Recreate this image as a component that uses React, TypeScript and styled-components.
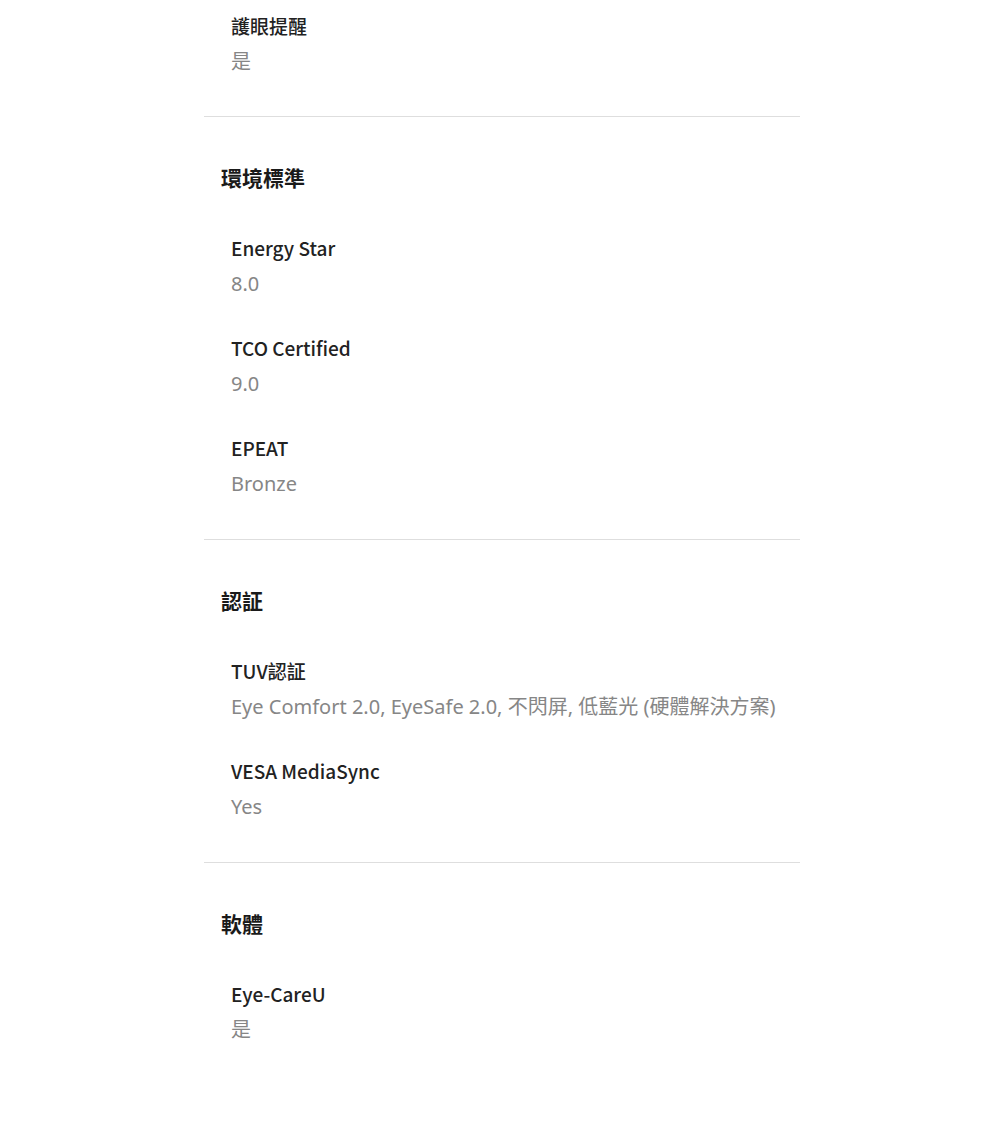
import React from 'react';
import styled, { createGlobalStyle } from 'styled-components';

const GlobalStyle = createGlobalStyle`
  body {
    margin: 0;
    background: #fff;
    font-family: "Noto Sans CJK TC", "Noto Sans", sans-serif;
    color: #222;
  }
`;

interface SpecItem {
  label: string;
  value: string;
}

interface SpecSection {
  title?: string;
  items: SpecItem[];
}

const sections: SpecSection[] = [
  {
    items: [{ label: '護眼提醒', value: '是' }],
  },
  {
    title: '環境標準',
    items: [
      { label: 'Energy Star', value: '8.0' },
      { label: 'TCO Certified', value: '9.0' },
      { label: 'EPEAT', value: 'Bronze' },
    ],
  },
  {
    title: '認証',
    items: [
      { label: 'TUV認証', value: 'Eye Comfort 2.0, EyeSafe 2.0, 不閃屏, 低藍光 (硬體解決方案)' },
      { label: 'VESA MediaSync', value: 'Yes' },
    ],
  },
  {
    title: '軟體',
    items: [{ label: 'Eye-CareU', value: '是' }],
  },
];

const Page = styled.div`
  width: 596px;
  margin-left: 204px;
  padding-bottom: 60px;
`;

const Section = styled.section<{ $last?: boolean; $first?: boolean }>`
  padding-top: ${p => (p.$first ? '8px' : '42px')};
  padding-bottom: ${p => (p.$last ? '0' : p.$first ? '36px' : '37px')};
  border-bottom: ${p => (p.$last ? 'none' : '1px solid #dedede')};
`;

const SectionTitle = styled.h3`
  margin: 0 0 35px;
  padding-left: 17px;
  font-size: 21px;
  line-height: 36px;
  font-weight: 700;
  color: #1a1a1a;
`;

const ItemList = styled.dl`
  margin: 0;
  padding-left: 27px;
  display: flex;
  flex-direction: column;
  gap: 28px;
`;

const Item = styled.div`
  display: flex;
  flex-direction: column;
`;

const Label = styled.dt`
  font-size: 19px;
  line-height: 36px;
  font-weight: 500;
  color: #222;
`;

const Value = styled.dd`
  margin: 0;
  font-family: "Noto Sans", "Noto Sans CJK TC", sans-serif;
  font-size: 20px;
  line-height: 36px;
  font-weight: 400;
  color: #868686;
`;

export default function App() {
  return (
    <>
      <GlobalStyle />
      <Page>
        {sections.map((s, i) => (
          <Section key={i} $first={i === 0} $last={i === sections.length - 1}>
            {s.title && <SectionTitle>{s.title}</SectionTitle>}
            <ItemList>
              {s.items.map(it => (
                <Item key={it.label}>
                  <Label>{it.label}</Label>
                  <Value>{it.value}</Value>
                </Item>
              ))}
            </ItemList>
          </Section>
        ))}
      </Page>
    </>
  );
}
